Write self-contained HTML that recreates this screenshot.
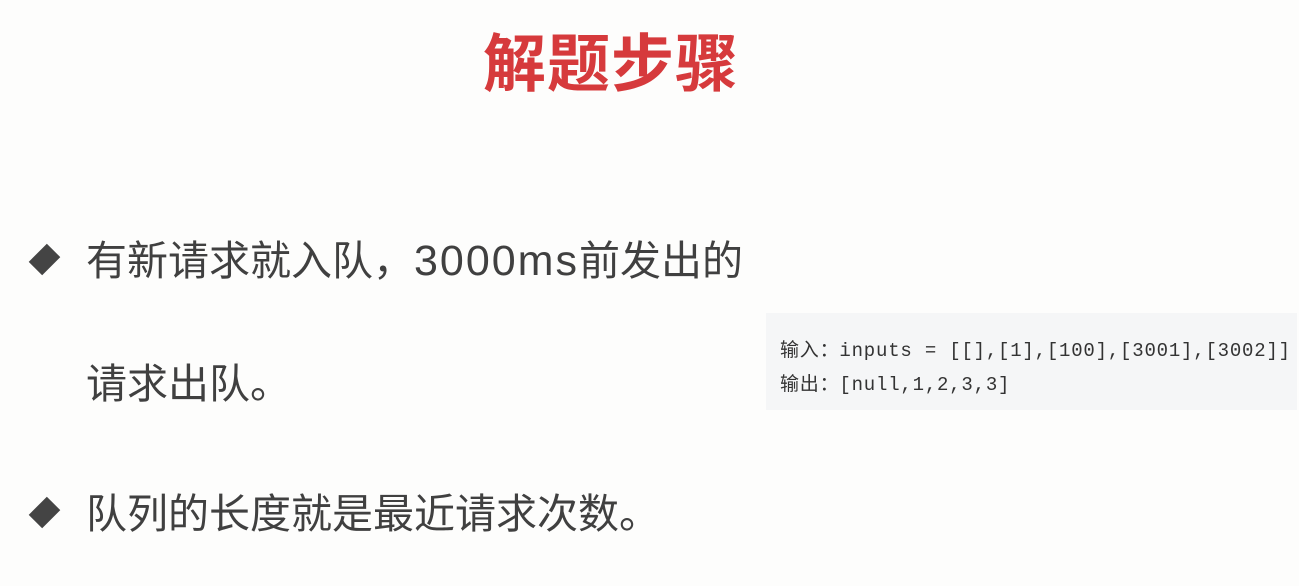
<!DOCTYPE html>
<html><head><meta charset="utf-8"><style>
body{margin:0;width:1299px;height:586px;background:#fdfdfc;position:relative;overflow:hidden;font-family:"Liberation Sans","Noto Sans CJK SC",sans-serif;color:#404040}
.t{position:absolute;left:0;width:1222px;text-align:center;top:27px;font-size:63px;font-weight:bold;color:#d63a3c;line-height:76px;letter-spacing:1px}
.l{position:absolute;font-size:41px;line-height:50px;white-space:nowrap}
.n{letter-spacing:2px;font-size:43px}
.d{position:absolute;width:19px;height:19px;background:#444;transform:rotate(45deg) scaleY(1.35)}
.c{position:absolute;left:766px;top:313px;width:531px;height:97px;background:#f5f6f7}
.c div{position:absolute;left:14px;font-family:"Liberation Mono","Noto Sans CJK SC",monospace;font-size:19px;color:#333;white-space:nowrap;letter-spacing:0.8px}
</style></head><body>
<div class="t">解题步骤</div>
<div class="d" style="left:35px;top:250px"></div>
<div class="l" style="left:86px;top:236px">有新请求就入队，<span class="n">3000ms</span>前发出的</div>
<div class="l" style="left:86px;top:359px">请求出队。</div>
<div class="d" style="left:35px;top:503px"></div>
<div class="l" style="left:86px;top:489px">队列的长度就是最近请求次数。</div>
<div class="c">
<div style="top:22px">输入：inputs = [[],[1],[100],[3001],[3002]]</div>
<div style="top:56px">输出：[null,1,2,3,3]</div>
</div>
</body></html>
